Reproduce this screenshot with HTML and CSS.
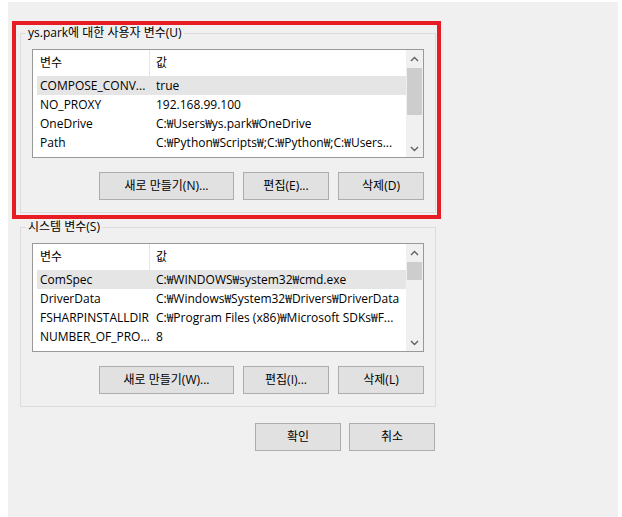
FILE: index.html
```html
<!DOCTYPE html>
<html lang="ko">
<head>
<meta charset="utf-8">
<title>환경 변수</title>
<link rel="stylesheet" href="styles.css">
</head>
<body>
<div class="dialog">
  <div class="annot">
    <section class="group">
      <div class="group-title">ys.park에 대한 사용자 변수(U)</div>
      <div class="listview">
        <div class="lv-body">
          <div class="lv-header"><div class="hcell c1">변수</div><div class="hcell c2">값</div></div>
          <div class="lv-row selected"><div class="cell c1">COMPOSE_CONV...</div><div class="cell c2">true</div></div>
          <div class="lv-row"><div class="cell c1">NO_PROXY</div><div class="cell c2">192.168.99.100</div></div>
          <div class="lv-row"><div class="cell c1">OneDrive</div><div class="cell c2">C:₩Users₩ys.park₩OneDrive</div></div>
          <div class="lv-row"><div class="cell c1">Path</div><div class="cell c2">C:₩Python₩Scripts₩;C:₩Python₩;C:₩Users...</div></div>
        </div>
        <div class="scrollbar">
          <div class="sb-arrow"><svg width="9" height="6" viewBox="0 0 9 6"><polyline points="1,5 4.5,1.5 8,5" fill="none" stroke="#606060" stroke-width="1.4"/></svg></div>
          <div class="sb-track"><div class="sb-thumb thumb-user"></div></div>
          <div class="sb-arrow"><svg width="9" height="6" viewBox="0 0 9 6"><polyline points="1,1 4.5,4.5 8,1" fill="none" stroke="#606060" stroke-width="1.4"/></svg></div>
        </div>
      </div>
      <div class="btn-row">
        <button class="btn btn-wide">새로 만들기(N)...</button>
        <button class="btn">편집(E)...</button>
        <button class="btn">삭제(D)</button>
      </div>
    </section>
  </div>

  <section class="group group-system">
    <div class="group-title">시스템 변수(S)</div>
    <div class="listview">
      <div class="lv-body">
        <div class="lv-header"><div class="hcell c1">변수</div><div class="hcell c2">값</div></div>
        <div class="lv-row selected"><div class="cell c1">ComSpec</div><div class="cell c2">C:₩WINDOWS₩system32₩cmd.exe</div></div>
        <div class="lv-row"><div class="cell c1">DriverData</div><div class="cell c2">C:₩Windows₩System32₩Drivers₩DriverData</div></div>
        <div class="lv-row"><div class="cell c1">FSHARPINSTALLDIR</div><div class="cell c2">C:₩Program Files (x86)₩Microsoft SDKs₩F...</div></div>
        <div class="lv-row"><div class="cell c1">NUMBER_OF_PRO...</div><div class="cell c2">8</div></div>
      </div>
      <div class="scrollbar">
        <div class="sb-arrow"><svg width="9" height="6" viewBox="0 0 9 6"><polyline points="1,5 4.5,1.5 8,5" fill="none" stroke="#606060" stroke-width="1.4"/></svg></div>
        <div class="sb-track"><div class="sb-thumb thumb-sys"></div></div>
        <div class="sb-arrow"><svg width="9" height="6" viewBox="0 0 9 6"><polyline points="1,1 4.5,4.5 8,1" fill="none" stroke="#606060" stroke-width="1.4"/></svg></div>
      </div>
    </div>
    <div class="btn-row">
      <button class="btn btn-wide">새로 만들기(W)...</button>
      <button class="btn">편집(I)...</button>
      <button class="btn">삭제(L)</button>
    </div>
  </section>

  <div class="footer">
    <button class="btn">확인</button>
    <button class="btn">취소</button>
  </div>
</div>
</body>
</html>
```

FILE: styles.css
```css
* { box-sizing: border-box; }

body {
  margin: 0;
  background: #ffffff;
  font-family: "Open Sans", "Noto Sans CJK KR", sans-serif;
  font-size: 12px;
  line-height: 16px;
  color: #000;
}

.dialog {
  margin: 2px 0 0 8px;
  width: 610px;
  height: 515px;
  background: #f0f0f0;
  padding: 19px 0 0 4px;
}

.annot {
  width: 429px;
  border: 4px solid #e81c24;
  padding: 0 1px 2px 4px;
}

.group {
  width: 416px;
  border: 1px solid #dcdcdc;
  margin-top: 8px;
  padding: 0 11px 12px;
}

.group-system { margin-left: 8px; }

.group-title {
  width: fit-content;
  height: 16px;
  margin: -9px 0 0 -6px;
  padding: 0 2px;
  background: #f0f0f0;
  white-space: nowrap;
}

.listview {
  margin-top: 8px;
  height: 109px;
  border: 1px solid #999;
  background: #fff;
  display: flex;
}

.lv-body {
  flex: 1;
  overflow: hidden;
}

.lv-header {
  display: flex;
  height: 26px;
}

.hcell {
  display: flex;
  align-items: center;
  height: 100%;
}

.hcell.c1 {
  width: 117px;
  padding-left: 7px;
  border-right: 1px solid #e5e5e5;
}

.hcell.c2 { padding-left: 6px; }

.lv-row {
  display: flex;
  align-items: center;
  height: 19px;
  margin-left: 4px;
  white-space: nowrap;
}

.lv-row.selected { background: #e5e5e5; }

.cell { overflow: hidden; }

.cell.c1 {
  width: 112px;
  flex: none;
  padding-left: 3px;
}

.cell.c2 { padding-left: 7px; }

.scrollbar {
  width: 17px;
  flex: none;
  display: flex;
  flex-direction: column;
  background: #f0f0f0;
}

.sb-arrow {
  height: 17px;
  flex: none;
  display: flex;
  align-items: center;
  justify-content: center;
}

.sb-track {
  flex: 1;
  padding: 1px 1px 0;
}

.sb-thumb { background: #cdcdcd; }
.thumb-user { height: 47px; }
.thumb-sys { height: 18px; }

.btn-row {
  display: flex;
  justify-content: flex-end;
  gap: 9px;
  margin-top: 14px;
}

.btn {
  width: 86px;
  height: 28px;
  padding: 0;
  border: 1px solid #adadad;
  background: #e1e1e1;
  font: inherit;
  color: #000;
}

.btn-wide { width: 135px; }

.footer {
  width: 416px;
  margin: 16px 0 0 8px;
  padding-right: 1px;
  display: flex;
  justify-content: flex-end;
  gap: 8px;
}
```
